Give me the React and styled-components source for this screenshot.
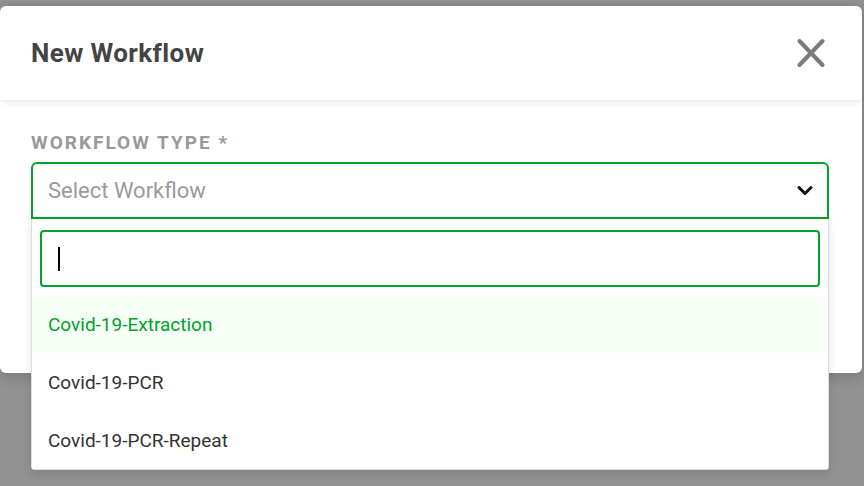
import React from "react";
import styled, { createGlobalStyle } from "styled-components";

const Global = createGlobalStyle`
  html, body { margin: 0; padding: 0; }
  body {
    background: #929292;
    font-family: Roboto, "Noto Sans", sans-serif;
    width: 864px;
    height: 486px;
    overflow: hidden;
  }
`;

const Page = styled.div`
  position: relative;
  padding-top: 6px;
  height: 480px;
`;

const Modal = styled.div`
  width: 862px;
  height: 367px;
  background: #fff;
  border-radius: 6px;
  box-shadow: 0 4px 14px rgba(0, 0, 0, 0.18);
  display: flex;
  flex-direction: column;
`;

const Header = styled.div`
  height: 94px;
  box-sizing: border-box;
  padding: 0 36px 0 31px;
  display: flex;
  align-items: center;
  justify-content: space-between;
  box-shadow: 0 2px 8px rgba(0, 0, 0, 0.1);
  position: relative;
  z-index: 1;
`;

const Title = styled.h2`
  margin: 0;
  font-size: 26px;
  font-weight: 700;
  color: #444;
  letter-spacing: 0.4px;
`;

const CloseBtn = styled.button`
  border: 0;
  background: none;
  padding: 0;
  width: 30px;
  height: 30px;
  display: flex;
  align-items: center;
  justify-content: center;
  cursor: pointer;
`;

const Body = styled.div`
  padding: 32px 33px 0 31px;
  position: relative;
`;

const Label = styled.div`
  font-size: 19px;
  font-weight: 700;
  color: #999;
  letter-spacing: 2px;
  line-height: 22px;
  margin-bottom: 8px;
`;

const Select = styled.div`
  height: 57px;
  box-sizing: border-box;
  border: 2px solid #00a32a;
  border-radius: 6px 6px 0 0;
  display: flex;
  align-items: center;
  justify-content: space-between;
  padding: 0 14px 0 15px;
  font-size: 22px;
  color: #9a9a9a;
`;

const Dropdown = styled.div`
  position: absolute;
  left: 31px;
  top: 219px;
  width: 798px;
  height: 251px;
  box-sizing: border-box;
  background: #fff;
  border: 1px solid #dcdcdc;
  border-top: 0;
  border-radius: 0 0 4px 4px;
  box-shadow: 0 4px 10px rgba(0, 0, 0, 0.12);
  padding: 11px 8px 0 8px;
  display: flex;
  flex-direction: column;
`;

const Search = styled.div`
  height: 57px;
  box-sizing: border-box;
  border: 2px solid #00a32a;
  border-radius: 4px;
  display: flex;
  align-items: center;
  padding-left: 16px;
  margin-bottom: 8px;
`;

const Caret = styled.span`
  width: 2px;
  height: 24px;
  background: #000;
`;

const Options = styled.div`
  margin: 0 -8px;
  display: flex;
  flex-direction: column;
`;

const Option = styled.div`
  height: 58px;
  display: flex;
  align-items: center;
  padding-left: 16px;
  font-size: 19px;
  color: ${(p) => (p.$active ? "#00a32a" : "#333")};
  background: ${(p) => (p.$active ? "#f7fff7" : "#fff")};
`;

export default function App() {
  const items = ["Covid-19-Extraction", "Covid-19-PCR", "Covid-19-PCR-Repeat"];
  return (
    <>
      <Global />
      <Page>
        <Modal>
          <Header>
            <Title>New Workflow</Title>
            <CloseBtn aria-label="Close">
              <svg width="28" height="30" viewBox="0 0 28 30">
                <path
                  d="M2.5 3 L25.5 27 M25.5 3 L2.5 27"
                  stroke="#7a7a7a"
                  strokeWidth="4"
                  strokeLinecap="round"
                  fill="none"
                />
              </svg>
            </CloseBtn>
          </Header>
          <Body>
            <Label>WORKFLOW TYPE *</Label>
            <Select>
              <span>Select Workflow</span>
              <svg width="16" height="11" viewBox="0 0 16 11">
                <path
                  d="M2 2.5 L8 8.5 L14 2.5"
                  stroke="#111"
                  strokeWidth="3"
                  fill="none"
                  strokeLinecap="round"
                  strokeLinejoin="round"
                />
              </svg>
            </Select>
          </Body>
        </Modal>
        <Dropdown>
          <Search>
            <Caret />
          </Search>
          <Options>
            {items.map((t, i) => (
              <Option key={t} $active={i === 0}>
                {t}
              </Option>
            ))}
          </Options>
        </Dropdown>
      </Page>
    </>
  );
}
